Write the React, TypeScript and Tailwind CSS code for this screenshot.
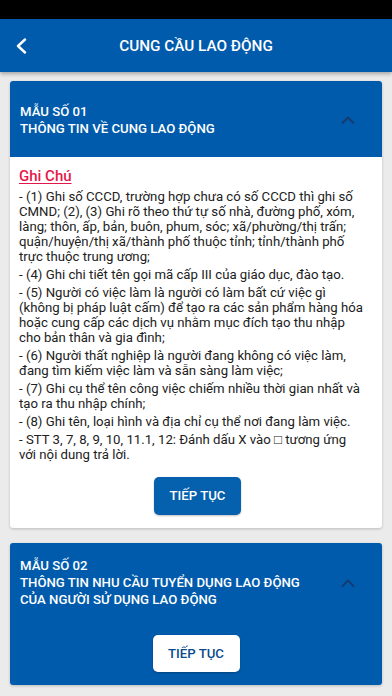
import React from "react"

const notes: string[][] = [
    [
        "- (1) Ghi số CCCD, trường hợp chưa có số CCCD thì ghi số",
        "CMND; (2), (3) Ghi rõ theo thứ tự số nhà, đường phố, xóm,",
        "làng; thôn, ấp, bản, buôn, phum, sóc; xã/phường/thị trấn;",
        "quận/huyện/thị xã/thành phố thuộc tỉnh; tỉnh/thành phố",
        "trực thuộc trung ương;",
    ],
    ["- (4) Ghi chi tiết tên gọi mã cấp III của giáo dục, đào tạo."],
    [
        "- (5) Người có việc làm là người có làm bất cứ việc gì",
        "(không bị pháp luật cấm) để tạo ra các sản phẩm hàng hóa",
        "hoặc cung cấp các dịch vụ nhằm mục đích tạo thu nhập",
        "cho bản thân và gia đình;",
    ],
    [
        "- (6) Người thất nghiệp là người đang không có việc làm,",
        "đang tìm kiếm việc làm và sẵn sàng làm việc;",
    ],
    [
        "- (7) Ghi cụ thể tên công việc chiếm nhiều thời gian nhất và",
        "tạo ra thu nhập chính;",
    ],
    ["- (8) Ghi tên, loại hình và địa chỉ cụ thể nơi đang làm việc."],
    [
        "- STT 3, 7, 8, 9, 10, 11.1, 12: Đánh dấu X vào □ tương ứng",
        "với nội dung trả lời.",
    ],
]

function ChevronUp() {
    return (
        <svg width="14" height="8" viewBox="0 0 14 8" fill="none">
            <polyline
                points="1.5,7 7,1.5 12.5,7"
                stroke="#143a6e"
                strokeWidth="1.8"
                strokeLinecap="round"
                strokeLinejoin="round"
            />
        </svg>
    )
}

export default function App() {
    return (
        <div className="w-[392px] h-[696px] bg-[#ebebeb] overflow-hidden flex flex-col font-['Roboto',sans-serif]">
            <div className="h-[19px] bg-black shrink-0" />

            <header className="h-[53px] shrink-0 bg-[#005bac] grid grid-cols-[48px_1fr_48px] items-center shadow-[0_2px_4px_rgba(0,0,0,0.3)] relative z-10">
                <button className="h-full flex items-center pl-[15px]">
                    <svg width="12" height="16" viewBox="0 0 12 16" fill="none">
                        <polyline
                            points="10,1.5 3,8 10,14.5"
                            stroke="white"
                            strokeWidth="2.4"
                            strokeLinecap="round"
                            strokeLinejoin="round"
                        />
                    </svg>
                </button>
                <h1 className="text-center text-white text-[15.3px] font-medium leading-5">
                    CUNG CẦU LAO ĐỘNG
                </h1>
                <div />
            </header>

            <main className="px-[10px] pt-[9px] flex flex-col gap-[15px]">
                <section className="bg-white rounded-[3px] overflow-hidden shadow-[0_1px_3px_rgba(0,0,0,0.2)]">
                    <div className="bg-[#005bac] pl-[10px] pr-[27px] pt-[22px] pb-[20px] flex items-center justify-between">
                        <div className="text-white text-[13.2px] font-medium leading-[17px]">
                            <div>MẪU SỐ 01</div>
                            <div>THÔNG TIN VỀ CUNG LAO ĐỘNG</div>
                        </div>
                        <ChevronUp />
                    </div>

                    <div className="pl-[9px] pr-[6px] pt-[9px] pb-[13px]">
                        <div className="text-[#e5174a] text-[15px] font-medium leading-5 underline underline-offset-2 decoration-1">
                            Ghi Chú
                        </div>
                        <div className="mt-[3px] flex flex-col gap-[3px] text-[13.2px] leading-[15px] text-[#212121]">
                            {notes.map((para, i) => (
                                <p key={i}>
                                    {para.map((line, j) => (
                                        <span key={j} className="block whitespace-nowrap">
                                            {line}
                                        </span>
                                    ))}
                                </p>
                            ))}
                        </div>
                        <div className="flex justify-center mt-[15px]">
                            <button className="w-[87px] h-[38px] rounded-[5px] bg-[#0560ad] text-white text-[13.2px] font-medium shadow-[0_1px_2px_rgba(0,0,0,0.25)]">
                                TIẾP TỤC
                            </button>
                        </div>
                    </div>
                </section>

                <section className="bg-[#005bac] rounded-[3px] shadow-[0_1px_3px_rgba(0,0,0,0.2)] pt-[14px] pb-[13px]">
                    <div className="pl-[10px] pr-[27px] flex items-center justify-between">
                        <div className="text-white text-[13.2px] font-medium leading-[17px]">
                            <div>MẪU SỐ 02</div>
                            <div>THÔNG TIN NHU CẦU TUYỂN DỤNG LAO ĐỘNG</div>
                            <div>CỦA NGƯỜI SỬ DỤNG LAO ĐỘNG</div>
                        </div>
                        <ChevronUp />
                    </div>
                    <div className="flex justify-center mt-[27px]">
                        <button className="w-[87px] h-[37px] rounded-[5px] bg-white text-[#0b4a8b] text-[13.2px] font-medium shadow-[0_1px_2px_rgba(0,0,0,0.25)]">
                            TIẾP TỤC
                        </button>
                    </div>
                </section>
            </main>
        </div>
    )
}
